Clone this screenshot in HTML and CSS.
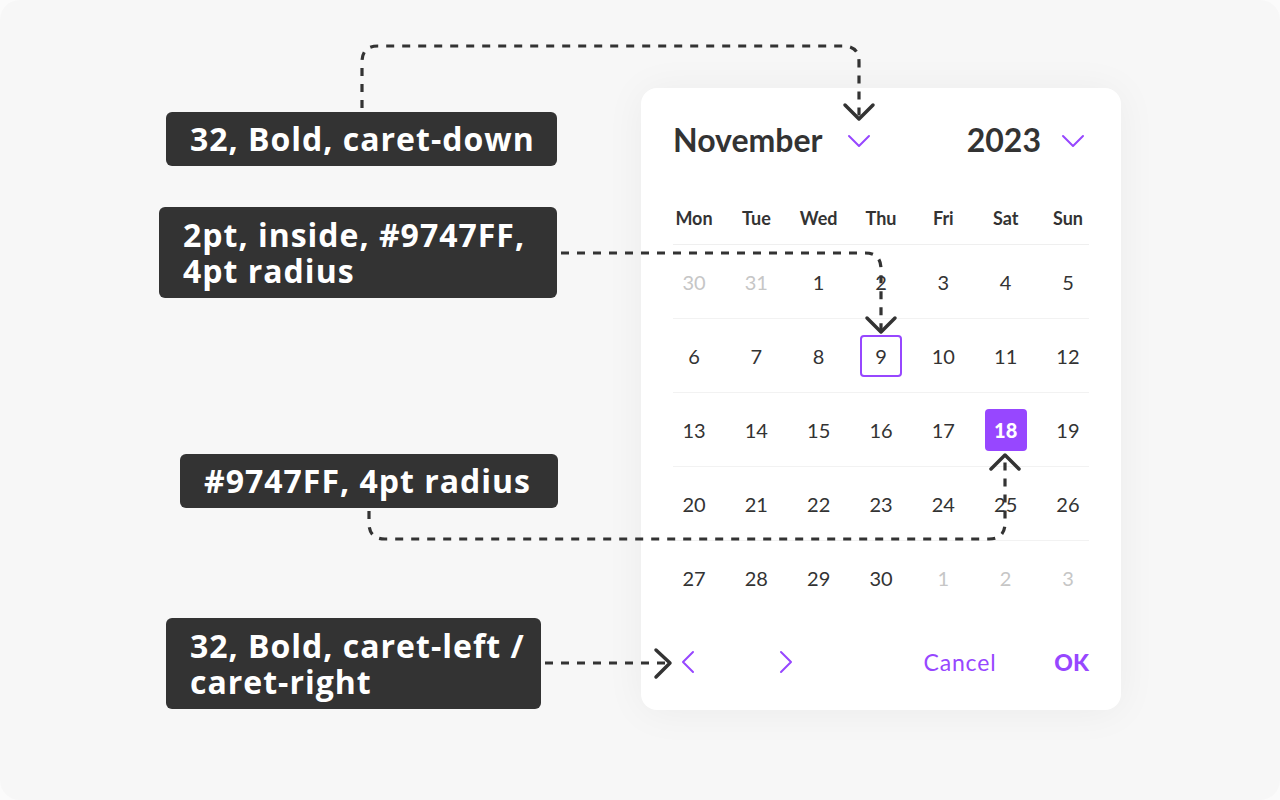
FILE: index.html
```html
<!DOCTYPE html>
<html lang="en">
<head>
<meta charset="utf-8">
<title>Date picker spec</title>
<link rel="stylesheet" href="styles.css">
</head>
<body>
<div class="stage">
  <div class="card">
    <div class="cal-head">
      <div class="picker picker-month">
        <span class="picker-label">November</span>
        <svg class="icon" viewBox="0 0 32 32"><polyline points="6,12 16,22 26,12"/></svg>
      </div>
      <div class="picker">
        <span class="picker-label">2023</span>
        <svg class="icon" viewBox="0 0 32 32"><polyline points="6,12 16,22 26,12"/></svg>
      </div>
    </div>
    <div class="weekdays">
      <span class="cell">Mon</span><span class="cell">Tue</span><span class="cell">Wed</span><span class="cell">Thu</span><span class="cell">Fri</span><span class="cell">Sat</span><span class="cell">Sun</span>
    </div>
    <div class="week">
      <span class="cell day muted">30</span><span class="cell day muted">31</span><span class="cell day">1</span><span class="cell day">2</span><span class="cell day">3</span><span class="cell day">4</span><span class="cell day">5</span>
    </div>
    <div class="week">
      <span class="cell day">6</span><span class="cell day">7</span><span class="cell day">8</span><span class="cell day today">9</span><span class="cell day">10</span><span class="cell day">11</span><span class="cell day">12</span>
    </div>
    <div class="week">
      <span class="cell day">13</span><span class="cell day">14</span><span class="cell day">15</span><span class="cell day">16</span><span class="cell day">17</span><span class="cell day selected">18</span><span class="cell day">19</span>
    </div>
    <div class="week">
      <span class="cell day">20</span><span class="cell day">21</span><span class="cell day">22</span><span class="cell day">23</span><span class="cell day">24</span><span class="cell day">25</span><span class="cell day">26</span>
    </div>
    <div class="week week-last">
      <span class="cell day">27</span><span class="cell day">28</span><span class="cell day">29</span><span class="cell day">30</span><span class="cell day muted">1</span><span class="cell day muted">2</span><span class="cell day muted">3</span>
    </div>
    <div class="cal-foot">
      <div class="nav">
        <svg class="icon" viewBox="0 0 32 32"><polyline points="20,6 10,16 20,26"/></svg>
        <svg class="icon" viewBox="0 0 32 32"><polyline points="12,6 22,16 12,26"/></svg>
      </div>
      <div class="actions">
        <button class="btn">Cancel</button>
        <button class="btn btn-ok">OK</button>
      </div>
    </div>
  </div>

  <svg class="connectors" viewBox="0 0 1280 800">
    <path class="dash" d="M362 108 V62 Q362 46 378 46 H843 Q859 46 859 62 V117"/>
    <polyline class="head" points="845,105 859,119 873,105"/>
    <path class="dash" d="M561 253 H865 Q881 253 881 269 V330"/>
    <polyline class="head" points="867,318 881,332 895,318"/>
    <path class="dash" d="M369 511 V523 Q369 539 385 539 H989 Q1005 539 1005 523 V458"/>
    <polyline class="head" points="991,469 1005,455 1019,469"/>
    <path class="dash" d="M545 663 H668"/>
    <polyline class="head" points="656,650 670,663 656,677"/>
  </svg>

  <div class="note note-1">32, Bold, caret-down</div>
  <div class="note note-2">2pt, inside, #9747FF,<br>4pt radius</div>
  <div class="note note-3">#9747FF, 4pt radius</div>
  <div class="note note-4">32, Bold, caret-left /<br>caret-right</div>
</div>
</body>
</html>
```

FILE: styles.css
```css
* { box-sizing: border-box; }

html, body {
  margin: 0;
  padding: 0;
  background: #fbfbfb;
}

.stage {
  position: relative;
  width: 1280px;
  height: 800px;
  background: #f7f7f7;
  border-radius: 20px;
  display: flex;
  justify-content: flex-end;
  align-items: flex-start;
  padding: 88px 159px 0 0;
  font-family: Lato, "Noto Sans", sans-serif;
  color: #333333;
}

.card {
  width: 480px;
  background: #ffffff;
  border-radius: 16px;
  padding: 32px;
  box-shadow: 0 2px 40px rgba(0, 0, 0, 0.05);
}

.icon {
  width: 32px;
  height: 32px;
  flex: none;
  fill: none;
  stroke: #9747FF;
  stroke-width: 2;
  stroke-linecap: round;
  stroke-linejoin: round;
}

.cal-head {
  height: 40px;
  display: flex;
  justify-content: space-between;
  align-items: center;
}

.picker {
  display: flex;
  align-items: center;
  gap: 16px;
}

.picker-month {
  gap: 20px;
}

.picker-label {
  font-size: 32px;
  font-weight: 700;
  line-height: 40px;
  color: #333333;
}

.weekdays,
.week {
  display: grid;
  grid-template-columns: repeat(7, 42px);
  justify-content: space-between;
  align-items: center;
}

.weekdays {
  margin-top: 31px;
  height: 54px;
  border-bottom: 1px solid #efefef;
  font-size: 18px;
  font-weight: 700;
}

.week {
  height: 74px;
  border-bottom: 1px solid #f2f2f2;
}

.week-last {
  border-bottom: 0;
}

.cell {
  height: 42px;
  display: flex;
  justify-content: center;
  align-items: center;
  white-space: nowrap;
}

.day {
  font-size: 20px;
  font-weight: 400;
  border-radius: 4px;
  color: #333333;
}

.day.muted {
  color: #c6c6c6;
}

.day.today {
  border: 2px solid #9747FF;
}

.day.selected {
  background: #9747FF;
  color: #ffffff;
  font-weight: 900;
}

.cal-foot {
  margin-top: 31px;
  height: 32px;
  display: flex;
  justify-content: space-between;
  align-items: center;
}

.nav {
  display: flex;
  gap: 64px;
}

.actions {
  display: flex;
  align-items: center;
  gap: 58px;
}

.btn {
  background: none;
  border: 0;
  padding: 0;
  font-family: Lato, "Noto Sans", sans-serif;
  font-size: 23px;
  line-height: 32px;
  letter-spacing: 0.8px;
  color: #9747FF;
  cursor: pointer;
}

.btn-ok {
  font-weight: 900;
  letter-spacing: 0;
}

.connectors {
  position: absolute;
  left: 0;
  top: 0;
  width: 1280px;
  height: 800px;
  pointer-events: none;
}

.dash {
  fill: none;
  stroke: #333333;
  stroke-width: 3.2;
  stroke-dasharray: 8 8;
}

.head {
  fill: none;
  stroke: #333333;
  stroke-width: 3.5;
  stroke-linecap: round;
  stroke-linejoin: round;
}

.note {
  position: absolute;
  background: #333333;
  color: #ffffff;
  border-radius: 6px;
  padding: 9px 24px;
  font-family: "Open Sans", "DejaVu Sans", sans-serif;
  font-weight: 700;
  font-size: 32px;
  line-height: 36px;
  letter-spacing: 1px;
  white-space: nowrap;
}

.note-1 { left: 166px; top: 112px; width: 391px; }
.note-2 { left: 159px; top: 207px; width: 398px; padding-top: 10px; padding-bottom: 9px; }
.note-3 { left: 180px; top: 454px; width: 378px; }
.note-4 { left: 166px; top: 618px; width: 375px; padding-top: 10px; padding-bottom: 9px; }
```
